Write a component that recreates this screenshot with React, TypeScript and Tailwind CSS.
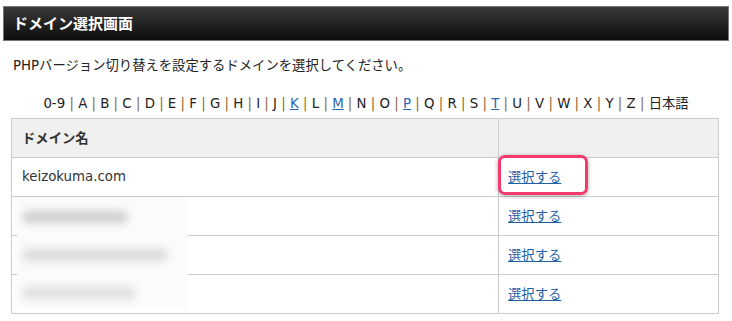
const letters = ["0-9", "A", "B", "C", "D", "E", "F", "G", "H", "I", "J", "K", "L", "M", "N", "O", "P", "Q", "R", "S", "T", "U", "V", "W", "X", "Y", "Z", "日本語"];
const linked = ["K", "M", "P", "T"];

const rows = ["keizokuma.com", "", "", ""];

export default function App() {
  return (
    <div
      className="w-[732px] h-[321px] bg-white px-[3px] pt-[6px] text-[13.33px] text-[#222]"
      style={{ fontFamily: '"DejaVu Sans", "Noto Sans CJK JP", sans-serif' }}
    >
      <div className="flex h-[35px] items-center border border-[#777] bg-gradient-to-b from-[#3a3a3a] to-[#0e0e0e] px-[9px]">
        <div
          className="text-[15px] font-bold text-white"
          style={{ fontFamily: '"Noto Sans CJK JP", sans-serif' }}
        >
          ドメイン選択画面
        </div>
      </div>

      <div className="px-[8px]">
        <p className="mt-[15px] ml-[2px] leading-[20px]">
          PHPバージョン切り替えを設定するドメインを選択してください。
        </p>

        <div className="mt-[18px] text-center leading-[20px]">
          {letters.map((l, i) => (
            <span key={l}>
              {i > 0 && <span className="text-[#8a6a3a]"> | </span>}
              {linked.includes(l) ? (
                <a href="#" className="text-[#2a66b0] underline">
                  {l}
                </a>
              ) : (
                <span>{l}</span>
              )}
            </span>
          ))}
        </div>

        <div className="relative mt-[4px]">
          <table className="w-[708px] border-collapse">
            <thead>
              <tr className="bg-[#f0f0f0]">
                <th className="h-[39px] w-[487px] border border-[#ccc] px-[10px] text-left font-bold text-[#333]">
                  <span style={{ fontFamily: '"Noto Sans CJK JP", sans-serif' }}>ドメイン名</span>
                </th>
                <th className="h-[39px] border border-[#ccc]"></th>
              </tr>
            </thead>
            <tbody>
              {rows.map((r, i) => (
                <tr key={i}>
                  <td className="h-[39px] border border-[#ccc] px-[10px] text-[#333]">{r}</td>
                  <td className="relative h-[39px] border border-[#ccc] px-[9px]">
                    {i === 0 && (
                      <span className="absolute left-[-1px] top-[-3px] h-[40px] w-[90px] rounded-[7px] border-[3px] border-[#f23a6c] shadow-[0_1px_4px_rgba(0,0,0,0.35)]"></span>
                    )}
                    <a
                      href="#"
                      className="relative text-[#1f5fa6] underline"
                      style={{ fontFamily: '"Noto Sans CJK JP", sans-serif' }}
                    >
                      選択する
                    </a>
                  </td>
                </tr>
              ))}
            </tbody>
          </table>

          <div className="absolute left-[6px] top-[79px] flex h-[111px] w-[171px] flex-col gap-[26px] bg-[#fbfbfb] px-[6px] pt-[14px]">
            <div className="h-[12px] w-[104px] rounded bg-[#cdcdcd] blur-[4px]"></div>
            <div className="h-[12px] w-[144px] rounded bg-[#dadada] blur-[4px]"></div>
            <div className="h-[12px] w-[112px] rounded bg-[#dedede] blur-[4px]"></div>
          </div>
        </div>
      </div>
    </div>
  );
}
